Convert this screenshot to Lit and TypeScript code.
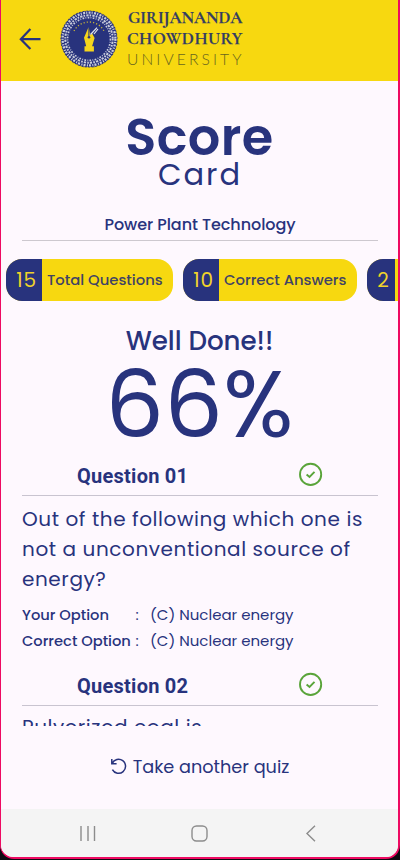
import { LitElement, html, svg, css } from "lit";
import { customElement, property } from "lit/decorators.js";

const checkIcon = html`<svg class="check" viewBox="0 0 24 24" width="24" height="24">
  <circle cx="11.6" cy="12.4" r="10.6" fill="none" stroke="#5aa43a" stroke-width="1.9" />
  <path d="M7.6 12.5l2.9 2.5 5-5.2" fill="none" stroke="#5aa43a" stroke-width="1.9" />
</svg>`;

@customElement("university-seal")
class UniversitySeal extends LitElement {
  static styles = css`
    :host { display: block; width: 58px; height: 58px; }
    svg { display: block; }
  `;

  render() {
    const rings = [
      { r: 26.4, w: 2.3, dash: "2 1.1 1.1 1.4" },
      { r: 23.7, w: 2, dash: "1.6 1.2 2.3 1.1" },
      { r: 21.4, w: 1.6, dash: "1.7 1.3 0.8 1.4" },
    ];
    return html`<svg viewBox="0 0 58 58" width="58" height="58">
      <circle cx="29" cy="29" r="28.6" fill="#28337d" />
      ${rings.map(
        (g) => svg`<circle cx="29" cy="29" r=${g.r} fill="none" stroke="#dfe1e8" stroke-opacity=".88"
          stroke-width=${g.w} stroke-dasharray=${g.dash} />`
      )}
      <circle cx="29" cy="29" r="28.5" fill="none" stroke="#f7d810" stroke-width="1" stroke-dasharray="1.5 2" />
      <path d="M14 21a17 17 0 0 1 30 0" fill="none" stroke="#c9b53a" stroke-width="1.3" stroke-dasharray="1.2 2" />
      <path d="M28.6 17l-4.6 10.7 2.2 8.6h-1.7v5.3h9.4v-5.3h-1.8l2.5-8.2-2.4-4.6-1.8 1.5z" fill="#f5d51c" />
      <path d="M28.9 17v9" stroke="#28337d" stroke-width="1" />
      <circle cx="29" cy="27.3" r="1.3" fill="#28337d" />
      <path d="M30.5 24.5l6.5-6.8M34 24l4-5" stroke="#e3e5ee" stroke-width="1.2" />
    </svg>`;
  }
}

@customElement("score-chip")
class ScoreChip extends LitElement {
  @property() value = "";
  @property() label = "";

  static styles = css`
    :host {
      display: flex; flex: none; height: 41.5px; box-sizing: border-box;
      border-radius: 16px; overflow: hidden; background: #f7d810; color: #28337d;
      font: 500 14.8px/42px Poppins, Inter, sans-serif;
    }
    .value {
      padding: 0 5.2px 0 10.2px; background: #28337d; color: #f0d32a;
      font-size: 20px; font-weight: 400; letter-spacing: .8px;
    }
    .label { padding: 0 10.5px 0 5px; white-space: nowrap; color: #3f4365; }
  `;

  render() {
    return html`<div class="value">${this.value}</div><div class="label">${this.label}</div>`;
  }
}

@customElement("question-head")
class QuestionHead extends LitElement {
  @property() label = "";

  static styles = css`
    :host {
      display: flex; justify-content: space-between; align-items: center; height: 42px; box-sizing: border-box;
      padding: 0 55px; border-bottom: 1px solid #c9c4d0; color: #28337d;
      font: 700 20px/24px Roboto, sans-serif;
    }
    .label { letter-spacing: .25px; padding-top: 3px; }
    .check { display: block; }
  `;

  render() {
    return html`<span class="label">${this.label}</span>${checkIcon}`;
  }
}

@customElement("app-root")
class AppRoot extends LitElement {
  static styles = css`
    :host { display: block; width: 400px; height: 860px; background: #0d0b12; overflow: hidden; }
    .frame {
      box-sizing: border-box; width: 400px; height: 859px; overflow: hidden;
      border: solid #ee0a62; border-width: 0 2px 2px 1px; border-radius: 0 0 14px 14px;
      background: #fef8fe; color: #28337d; display: flex; flex-direction: column;
      font-family: Poppins, Inter, sans-serif;
    }
    header { flex: none; display: flex; height: 80.5px; background: #f7d810; }
    .back { margin: 28px 0 0 18px; width: 22px; height: 22px; flex: none; }
    .seal { margin: 10px 0 0 19px; }
    .brand { margin: 8.4px 0 0 9px; white-space: nowrap; color: #333c63; }
    .brand div { height: 20.5px; line-height: 20.5px; font-family: "Cormorant Garamond", "Liberation Serif", serif; font-weight: 700; }
    .brand .first { font-size: 16.9px; padding-left: 1px; -webkit-text-stroke: .25px #333c63; }
    .brand .second { font-size: 17.2px; letter-spacing: .4px; -webkit-text-stroke: .25px #333c63; }
    .brand .third { font: 300 15.6px/20.5px Lato, sans-serif; letter-spacing: 3.1px; color: #67651f; }
    .title { margin-top: 24px; text-align: center; font-weight: 600; font-size: 51px; line-height: 64px; letter-spacing: .4px; }
    .subtitle { text-align: center; font-size: 30.5px; line-height: 32px; margin-top: -9.5px; letter-spacing: 2px; padding-left: 1px; }
    .subject {
      margin: 18.5px 20px 0 21px; height: 29px; line-height: 30px; border-bottom: 1px solid #cdc8cf;
      text-align: center; font-size: 16px; font-weight: 500; letter-spacing: -.05px; padding-bottom: 1px;
    }
    .chips { flex: none; margin: 18.5px 0 0 5px; display: flex; gap: 10px; overflow: hidden; }
    .praise { margin-top: 25px; text-align: center; font-weight: 500; font-size: 26.1px; line-height: 30px; }
    .percent { margin-top: 2px; text-align: center; font-size: 92.5px; line-height: 94px; letter-spacing: .3px; }
    .list { flex: none; height: 272px; margin: 2px 20px 0 21px; overflow: hidden; }
    .text { margin-top: 8px; font-size: 20px; line-height: 30px; letter-spacing: .58px; white-space: pre-line; }
    .answers {
      margin: 8px 0 0; display: grid; grid-template-columns: 113.5px 14.5px 1fr; grid-auto-rows: 26px;
      font-size: 15px; line-height: 26px; white-space: nowrap;
    }
    .answers b { font-weight: 500; font-size: 14.7px; }
    .second-head { margin-top: 10px; }
    .second-head + .text { margin-top: 6.5px; }
    .again { margin-top: 27px; display: flex; justify-content: center; align-items: center; gap: 6px; font-size: 17.7px; line-height: 28px; }
    nav { margin-top: auto; height: 48px; background: #f4f4f4; display: flex; justify-content: center; align-items: center; gap: 95px; }
    nav svg, .again svg, .back { display: block; }
  `;

  render() {
    return html`<div class="frame">
      <header>
        <svg class="back" viewBox="0 0 22 22" fill="none" stroke="#28337d" stroke-width="2.2">
          <path d="M21.5 11.2H2.2M11.4 1L1.8 11.2l9.6 9.8" />
        </svg>
        <university-seal class="seal"></university-seal>
        <div class="brand">
          <div class="first">GIRIJANANDA</div>
          <div class="second">CHOWDHURY</div>
          <div class="third">UNIVERSITY</div>
        </div>
      </header>
      <div class="title">Score</div>
      <div class="subtitle">Card</div>
      <div class="subject">Power Plant Technology</div>
      <div class="chips">
        <score-chip value="15" label="Total Questions"></score-chip>
        <score-chip value="10" label="Correct Answers"></score-chip>
        <score-chip value="2" label="Wrong Answers"></score-chip>
      </div>
      <div class="praise">Well Done!!</div>
      <div class="percent">66%</div>
      <div class="list">
        <question-head label="Question 01"></question-head>
        <div class="text">Out of the following which one is
not a unconventional source of
energy?</div>
        <div class="answers">
          <b>Your Option</b><span>:</span><span>(C) Nuclear energy</span>
          <b>Correct Option</b><span>:</span><span>(C) Nuclear energy</span>
        </div>
        <question-head class="second-head" label="Question 02"></question-head>
        <div class="text">Pulverized coal is</div>
      </div>
      <div class="again">
        <svg width="17" height="17" viewBox="0 0 17 17" fill="none" stroke="#28337d" stroke-width="1.5">
          <path d="M1.8 1v4.8h4.8M2.2 5.4A7 7 0 1 1 2.4 11.6" />
        </svg>
        <span>Take another quiz</span>
      </div>
      <nav>
        <svg width="16" height="17" viewBox="0 0 16 17" stroke="#8c8c8c" stroke-width="1.4"><path d="M1 1v15M8 1v15M14.5 1v15" /></svg>
        <svg width="17" height="17" viewBox="0 0 17 17"><rect x="1" y="1" width="15" height="15" rx="4.5" fill="none" stroke="#8c8c8c" stroke-width="1.4" /></svg>
        <svg width="16" height="17" viewBox="0 0 16 17" fill="none" stroke="#8c8c8c" stroke-width="1.4"><path d="M12 .8L4 8.5l8 7.7" /></svg>
      </nav>
    </div>`;
  }
}
